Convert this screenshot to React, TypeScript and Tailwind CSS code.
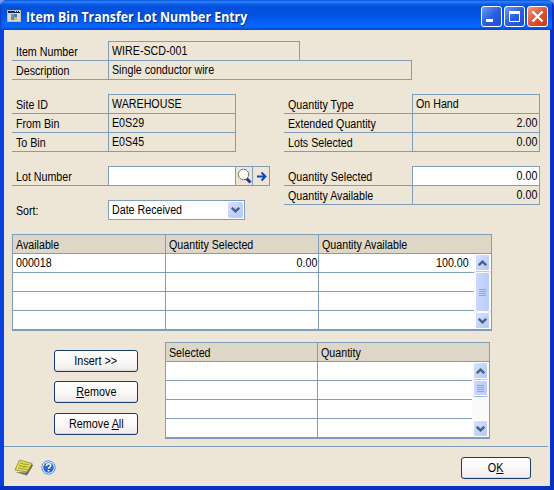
import type { ReactNode } from "react";

function T({ children, right = false, className = "" }: { children: ReactNode; right?: boolean; className?: string }) {
  return (
    <span
      className={`inline-block whitespace-pre scale-x-[0.89] ${right ? "origin-right" : "origin-left"} ${className}`}
    >
      {children}
    </span>
  );
}

type RowProps = {
  label: string;
  value?: string;
  labelW?: string;
  fieldW?: string;
  first?: boolean;
  right?: boolean;
  white?: boolean;
};

// A label/value row, 19px tall, ruled along the bottom
function Row({ label, value = "", labelW = "w-[96px]", fieldW = "w-[128px]", first = false, right = false, white = false }: RowProps) {
  return (
    <div className={`flex ${first ? "h-5" : "h-[19px]"}`}>
      <div className={`${labelW} shrink-0 border-b border-[#7f9db9] pl-1 leading-[16px] ${first ? "pt-[3px]" : "pt-[2px]"}`}>
        <T>{label}</T>
      </div>
      <div
        className={`${fieldW} shrink-0 border-x border-b border-[#7f9db9] leading-[16px] ${first ? "border-t pt-px" : "pt-px"} ${white ? "bg-white" : ""} ${right ? "pr-[2px] text-right" : "pl-[3px]"}`}
      >
        <T right={right}>{value}</T>
      </div>
    </div>
  );
}

function Chevron({ up = false }: { up?: boolean }) {
  return (
    <svg width="9" height="6" viewBox="0 0 9 6" className={up ? "rotate-180" : ""}>
      <path d="M.8 .8 4.5 4.4 8.2 .8" fill="none" stroke="#4d6185" strokeWidth="2.4" />
    </svg>
  );
}

function ArrowBox({ up = false }: { up?: boolean }) {
  return (
    <div className="flex h-[17px] w-[15px] shrink-0 items-center justify-center rounded-[2px] border border-white bg-linear-to-br from-[#d6e2fe] to-[#b4c8f6]">
      <Chevron up={up} />
    </div>
  );
}

function Scrollbar({ thumb }: { thumb: string }) {
  return (
    <div className="flex w-[17px] shrink-0 flex-col items-center bg-[#fbf9fa]">
      <ArrowBox up />
      <div className={`${thumb} mt-px flex w-[15px] shrink-0 flex-col items-center justify-center gap-px rounded-[2px] border border-white bg-linear-to-r from-[#cad8fd] to-[#b9cdfb] shadow-[0_1px_0_#9db5e0,0_-1px_0_#b5c8ec]`}>
        {[0, 1, 2, 3].map((i) => (
          <div key={i} className="h-px w-[7px] bg-[#8ba5e4]" />
        ))}
      </div>
      <div className="flex-1" />
      <ArrowBox />
    </div>
  );
}

function Grid({ heads, cols, rows, thumb, width }: { heads: string[]; cols: string[]; rows: string[][]; thumb: string; width: string }) {
  return (
    <div className={`${width} flex h-[97px] flex-col border border-b-2 border-[#7f9db9] bg-white`}>
      <div className="flex h-[19px] shrink-0 border-b border-[#7f9db9] bg-[#ded6c7]">
        {heads.map((h, i) => (
          <div key={h} className={`${i < heads.length - 1 ? cols[i] + " border-r" : "flex-1"} border-[#7f9db9] pt-[2px] pl-[3px] leading-[16px]`}>
            <T>{h}</T>
          </div>
        ))}
      </div>
      <div className="flex flex-1">
        <div className="flex-1">
          {rows.map((r, n) => (
            <div key={n} className={`flex border-[#7f9db9] ${n < rows.length - 1 ? "h-[19px] border-b" : "h-[18px]"}`}>
              {r.map((c, i) => (
                <div
                  key={i}
                  className={`${i < r.length - 1 ? cols[i] + " border-r" : "flex-1"} border-[#7f9db9] pt-px leading-[16px] ${i > 0 ? (i < r.length - 1 ? "pr-px text-right" : "pr-[5px] text-right") : "pl-[3px]"}`}
                >
                  <T right={i > 0}>{c}</T>
                </div>
              ))}
            </div>
          ))}
        </div>
        <Scrollbar thumb={thumb} />
      </div>
    </div>
  );
}

function Button({ children, w = "w-[84px]" }: { children: ReactNode; w?: string }) {
  return (
    <button className={`${w} flex h-[22px] items-center justify-center rounded-[3px] border border-[#143c68] bg-linear-to-b from-white via-[#fbf8f7] to-[#f0eae9] leading-[16px] shadow-[inset_0_-1px_0_#dcd8dc]`}>
      <span className="inline-block scale-x-[0.9] whitespace-pre">{children}</span>
    </button>
  );
}

function Caption({ kind }: { kind: "min" | "max" | "close" }) {
  return (
    <div
      className={`flex size-[21px] items-center justify-center rounded-[3px] border border-white ${kind === "close" ? "bg-linear-to-br from-[#ee9a80] via-[#e0532c] to-[#c63c14]" : "bg-linear-to-br from-[#6f9af4] via-[#2c5fe0] to-[#1c4fd0]"}`}
    >
      <svg width="19" height="19" viewBox="0 0 19 19" fill="none" stroke="white">
        {kind === "min" && <path d="M4 13.5h7" strokeWidth="3" />}
        {kind === "max" && (
          <>
            <path d="M4 5.5h11" strokeWidth="3" />
            <path d="M4.5 5v9.5h10V5" />
          </>
        )}
        {kind === "close" && <path d="m4.5 4.5 10 10m0-10-10 10" strokeWidth="2.3" />}
      </svg>
    </div>
  );
}

function WindowIcon() {
  return (
    <svg className="-mt-px shrink-0" width="14" height="12" viewBox="0 0 14 12" shapeRendering="crispEdges">
      <rect width="14" height="12" fill="#b9c0c8" />
      <rect x="1" y="1" width="12" height="2" fill="#10245c" />
      <rect x="1" y="3" width="12" height="8" fill="#dcd9cf" />
      <path d="M8 1h1v1H8zM10 1h1v1h-1zM12 1h1v1h-1z" fill="#dce6ff" />
      <rect x="4" y="4" width="3" height="3" fill="#6ca07c" />
      <rect x="7" y="4" width="3" height="3" fill="#3c7cd4" />
      <rect x="4" y="7" width="3" height="3" fill="#4e86d6" />
      <rect x="7" y="7" width="3" height="3" fill="#ecb32c" />
    </svg>
  );
}

function NoteIcon() {
  return (
    <svg width="20" height="17" viewBox="0 0 20 17">
      <path d="m1 13 12 3.500 6-10-1-2-6 9z" fill="#6a6c68" />
      <path d="m5.500 1 12.500 3.500-5 8.500L1 11z" fill="#e8e24a" stroke="#777638" strokeWidth=".7" />
      <path d="m6 4 2 .2 2 1.200 2-.4 3 1M5 6.500l2 .2 2 1 2-.2 3 .8M4 9l2 0 2 1 2-.2 3 .8" fill="none" stroke="#8d8a32" strokeWidth=".9" />
    </svg>
  );
}

function HelpIcon() {
  return (
    <svg width="15" height="15" viewBox="0 0 15 15">
      <circle cx="7.500" cy="7.500" r="6.700" fill="#f4f8ff" stroke="#5a8ad0" />
      <circle cx="7.500" cy="7.500" r="5.300" fill="#2c66c8" />
      <path d="M5.300 6c0-3 4.600-2.900 4.500-.4 0 1.500-2.200 1.500-2.200 3.200M7.600 10v1.600" fill="none" stroke="white" strokeWidth="1.600" />
    </svg>
  );
}

const blank3 = ["", "", ""];
const blank2 = ["", ""];

export default function App() {
  return (
    <div className="h-[490px] w-[554px] bg-[#7d9fe4]">
      <div className="flex h-[490px] w-[554px] flex-col overflow-hidden rounded-t-[7px] bg-[#0a46e0] font-['Liberation_Sans',Arial,sans-serif] text-[12px] text-black">
        <div className="flex h-[30px] shrink-0 items-center bg-[linear-gradient(180deg,#0a52d8_0%,#2b83fa_6%,#0b5ce6_14%,#0450dc_25%,#0353e2_50%,#0560f6_72%,#0567ff_88%,#0346d0_100%)] pt-[3px] pr-[6px] pl-[7px] shadow-[inset_1px_0_0_#0a3fd0,inset_-2px_0_0_#0831c4]">
          <WindowIcon />
          <div className="ml-[5px] flex-1 text-[14px] leading-[18px] font-bold text-white [text-shadow:1px_1px_1px_#0a2a80]">
            <span className="inline-block origin-left scale-x-[0.882] font-['Open_Sans',sans-serif] whitespace-pre">Item Bin Transfer Lot Number Entry</span>
          </div>
          <div className="flex gap-[2px]">
            <Caption kind="min" />
            <Caption kind="max" />
            <Caption kind="close" />
          </div>
        </div>
        <div className="flex flex-1 bg-linear-to-r from-[#0840dc] via-[#0b53ee] to-[#0b53ee] px-1 pb-1 shadow-[inset_-4px_-4px_0_#0831c4,inset_-2px_-2px_0_#001ea0]">
          <div className="flex flex-1 flex-col bg-[#ede6d6]">
            <div className="pt-[11px] pl-2">
              <Row first label="Item Number" value="WIRE-SCD-001" fieldW="w-[192px]" />
              <div className="flex">
                <Row label="Description" value="Single conductor wire" fieldW="w-[192px] border-r-0" />
                <div className="-mt-px h-5 w-[112px] border-y border-r border-[#7f9db9]" />
              </div>
            </div>
            <div className="flex justify-between pt-[14px] pr-[10px] pl-2">
              <div>
                <Row first label="Site ID" value="WAREHOUSE" />
                <Row label="From Bin" value="E0S29" />
                <Row label="To Bin" value="E0S45" />
              </div>
              <div>
                <Row first label="Quantity Type" value="On Hand" labelW="w-[128px]" />
                <Row right label="Extended Quantity" value="2.00" labelW="w-[128px]" />
                <Row right label="Lots Selected" value="0.00" labelW="w-[128px]" />
              </div>
            </div>
            <div className="flex justify-between pt-[14px] pr-[10px] pl-2">
              <div>
                <div className="flex">
                  <Row first white label="Lot Number" />
                  <div className="flex h-5 w-[17px] items-center justify-center border-y border-r border-[#7f9db9]">
                    <svg width="15" height="16" viewBox="0 0 15 16">
                      <path d="m9.500 10.500 4 4" stroke="#143a9e" strokeWidth="3" />
                      <circle cx="6.500" cy="6.500" r="5.200" fill="#fffdf8" stroke="#4a4640" strokeWidth="1" strokeDasharray="2 .7" />
                    </svg>
                  </div>
                  <div className="flex h-5 w-[17px] items-center justify-center border-y border-r border-[#7f9db9]">
                    <svg width="11" height="11" viewBox="0 0 11 11">
                      <path d="M1 5.500h8M5.500 1.500l4 4-4 4" fill="none" stroke="#0d45b4" strokeWidth="1.900" />
                    </svg>
                  </div>
                </div>
                <div className="mt-[14px] flex h-5">
                  <div className="w-[96px] pt-[3px] pl-1 leading-[16px]">
                    <T>Sort:</T>
                  </div>
                  <div className="flex w-[137px] justify-between border border-[#7f9db9] bg-white pt-px pr-px pl-[3px] leading-[16px]">
                    <T>Date Received</T>
                    <div className="flex h-4 w-[15px] items-center justify-center rounded-[2px] bg-linear-to-br from-[#d2dffd] to-[#b3c8f8]">
                      <Chevron />
                    </div>
                  </div>
                </div>
              </div>
              <div>
                <Row first right white label="Quantity Selected" value="0.00" labelW="w-[128px]" />
                <Row right label="Quantity Available" value="0.00" labelW="w-[128px]" />
              </div>
            </div>
            <div className="pt-[14px] pl-2">
              <Grid
                width="w-[480px]"
                heads={["Available", "Quantity Selected", "Quantity Available"]}
                cols={["w-[153px]", "w-[153px]"]}
                rows={[["000018", "0.00", "100.00"], blank3, blank3, blank3]}
                thumb="h-[40px]"
              />
            </div>
            <div className="flex gap-[27px] pt-[11px] pl-[50px]">
              <div className="flex flex-col pt-2">
                <Button>{"Insert >>"}</Button>
                <div className="mt-[9px] mb-[10px] h-[22px]">
                  <Button><u>R</u>emove</Button>
                </div>
                <Button>Remove <u>A</u>ll</Button>
              </div>
              <Grid
                width="w-[325px]"
                heads={["Selected", "Quantity"]}
                cols={["w-[152px]"]}
                rows={[blank2, blank2, blank2, blank2]}
                thumb="h-[16px]"
              />
            </div>
            <div className="mt-auto mr-[2px] flex h-10 items-center border-t border-[#7f9db9] pt-[2px] pr-[17px] pl-[10px]">
              <NoteIcon />
              <div className="w-[7px]" />
              <HelpIcon />
              <div className="flex-1" />
              <Button w="w-[70px]">O<u>K</u></Button>
            </div>
          </div>
        </div>
      </div>
    </div>
  );
}
